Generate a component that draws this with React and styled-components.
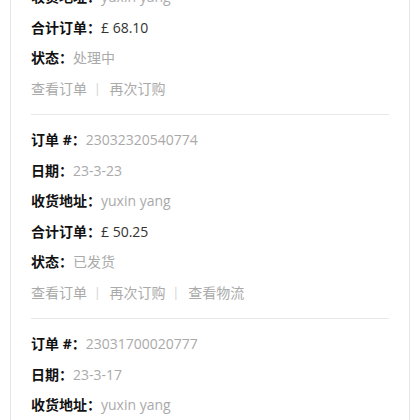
import React from "react";
import styled, { createGlobalStyle } from "styled-components";

const Global = createGlobalStyle`
  html, body { margin: 0; padding: 0; background: #fff; }
  body {
    font-family: "Open Sans", "Noto Sans CJK SC", sans-serif;
    font-size: 14px;
    -webkit-font-smoothing: antialiased;
  }
`;

const Viewport = styled.div`
  height: 420px;
  overflow: hidden;
`;

const Card = styled.div`
  margin: -89px 10px 0;
  padding: 0 20px;
  border-left: 1px solid #e6e6e6;
  border-right: 1px solid #e6e6e6;
  background: #fff;
`;

const Order = styled.div`
  padding: 10px 0;
  border-bottom: 1px solid #e8e8e8;
`;

const Row = styled.div`
  display: flex;
  align-items: center;
  height: 30.5px;
  line-height: 20px;
  white-space: nowrap;
`;

const Label = styled.span`
  font-weight: 700;
  color: #111;
`;

const Value = styled.span`
  color: ${(p) => (p.$dark ? "#333" : "#aaa")};
`;

const Link = styled.span`
  color: #aaa;
`;

const Sep = styled.span`
  color: #d0d0d0;
  margin: 0 9px 0 7px;
  font-size: 12px;
`;

const orders = [
  {
    no: "23032320541234",
    date: "23-3-23",
    name: "yuxin yang",
    total: "£ 68.10",
    status: "处理中",
    links: ["查看订单", "再次订购"],
  },
  {
    no: "23032320540774",
    date: "23-3-23",
    name: "yuxin yang",
    total: "£ 50.25",
    status: "已发货",
    links: ["查看订单", "再次订购", "查看物流"],
  },
  {
    no: "23031700020777",
    date: "23-3-17",
    name: "yuxin yang",
    total: "£ 42.80",
    status: "已发货",
    links: ["查看订单", "再次订购", "查看物流"],
  },
];

export default function App() {
  return (
    <Viewport>
      <Global />
      <Card>
        {orders.map((o, i) => (
          <Order key={i}>
            <Row>
              <Label>订单 #：</Label>
              <Value>{o.no}</Value>
            </Row>
            <Row>
              <Label>日期：</Label>
              <Value>{o.date}</Value>
            </Row>
            <Row>
              <Label>收货地址：</Label>
              <Value>{o.name}</Value>
            </Row>
            <Row>
              <Label>合计订单：</Label>
              <Value $dark>{o.total}</Value>
            </Row>
            <Row>
              <Label>状态：</Label>
              <Value>{o.status}</Value>
            </Row>
            <Row>
              {o.links.map((l, j) => (
                <React.Fragment key={j}>
                  {j > 0 && <Sep>|</Sep>}
                  <Link>{l}</Link>
                </React.Fragment>
              ))}
            </Row>
          </Order>
        ))}
      </Card>
    </Viewport>
  );
}
